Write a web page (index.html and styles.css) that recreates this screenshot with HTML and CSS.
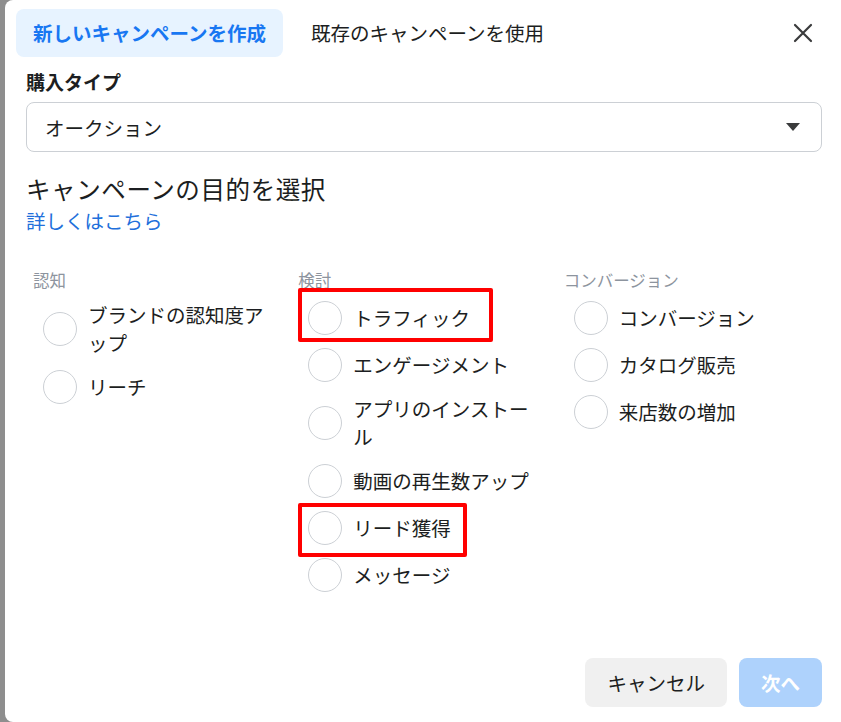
FILE: index.html
```html
<!DOCTYPE html>
<html lang="ja">
<head>
  <meta charset="UTF-8" />
  <meta name="viewport" content="width=device-width, initial-scale=1.0" />
  <title>キャンペーンを作成</title>
  <link rel="stylesheet" href="styles.css">
</head>
<body>
  <div class="dialog">
    <header class="dialog-header">
      <div class="tabs">
        <a class="tab active" href="#">新しいキャンペーンを作成</a>
        <a class="tab" href="#">既存のキャンペーンを使用</a>
      </div>
      <button class="close" type="button" aria-label="閉じる">
        <svg width="20" height="20" viewBox="0 0 20 20">
          <path d="M2 2 L18 18 M18 2 L2 18" stroke="#3a3b3c" stroke-width="2.2" stroke-linecap="round" fill="none" />
        </svg>
      </button>
    </header>

    <div class="dialog-body">
      <label class="field-label" for="buying-type">購入タイプ</label>
      <div class="select" id="buying-type">
        <span>オークション</span>
        <svg width="16" height="10" viewBox="0 0 16 10">
          <path d="M1 1 L15 1 L8 9 Z" fill="#3a3b3c" />
        </svg>
      </div>

      <h2 class="section-title">キャンペーンの目的を選択</h2>
      <a class="more-link" href="#">詳しくはこちら</a>

      <div class="objectives">
        <div class="column">
          <div class="column-label">認知</div>
          <label class="option"><span class="radio"></span><span class="option-text">ブランドの認知度アップ</span></label>
          <label class="option"><span class="radio"></span><span class="option-text">リーチ</span></label>
        </div>
        <div class="column">
          <div class="column-label">検討</div>
          <label class="option marked mark-traffic"><span class="radio"></span><span class="option-text">トラフィック</span></label>
          <label class="option"><span class="radio"></span><span class="option-text">エンゲージメント</span></label>
          <label class="option"><span class="radio"></span><span class="option-text">アプリのインストール</span></label>
          <label class="option"><span class="radio"></span><span class="option-text">動画の再生数アップ</span></label>
          <label class="option marked mark-lead"><span class="radio"></span><span class="option-text">リード獲得</span></label>
          <label class="option"><span class="radio"></span><span class="option-text">メッセージ</span></label>
        </div>
        <div class="column">
          <div class="column-label">コンバージョン</div>
          <label class="option"><span class="radio"></span><span class="option-text">コンバージョン</span></label>
          <label class="option"><span class="radio"></span><span class="option-text">カタログ販売</span></label>
          <label class="option"><span class="radio"></span><span class="option-text">来店数の増加</span></label>
        </div>
      </div>
    </div>

    <footer class="dialog-footer">
      <button class="btn btn-cancel" type="button">キャンセル</button>
      <button class="btn btn-next" type="button" disabled>次へ</button>
    </footer>
  </div>
</body>
</html>
```

FILE: styles.css
```css
body {
  margin: 0;
  padding: 0;
  background-color: #8e8e8e;
  font-family: "Noto Sans CJK JP", "Noto Sans", sans-serif;
  color: #1c1e21;
  overflow: hidden;
}

.dialog {
  margin-left: 5px;
  height: 722px;
  background-color: #fff;
  border-radius: 8px 0 0 8px;
  display: flex;
  flex-direction: column;
  box-sizing: border-box;
}

.dialog-header {
  display: flex;
  align-items: center;
  justify-content: space-between;
  padding: 9px 27px 0 11px;
}

.tabs {
  display: flex;
  gap: 11px;
}

.tab {
  display: block;
  height: 48px;
  line-height: 48px;
  padding: 0 17px;
  border-radius: 8px;
  font-size: 19.5px;
  color: #1c1e21;
  text-decoration: none;
}

.tab.active {
  background-color: #e7f3ff;
  color: #1877f2;
  font-weight: bold;
}

.close {
  width: 22px;
  height: 22px;
  padding: 0;
  border: none;
  background: none;
  display: flex;
  align-items: center;
  justify-content: center;
  cursor: pointer;
}

.dialog-body {
  padding: 0 19px 0 21px;
}

.field-label {
  display: block;
  margin-top: 11px;
  font-size: 19px;
  line-height: 28px;
  font-weight: bold;
}

.select {
  margin-top: 6px;
  height: 50px;
  box-sizing: border-box;
  border: 1px solid #ccd0d5;
  border-radius: 8px;
  padding: 0 20px 0 18px;
  display: flex;
  align-items: center;
  justify-content: space-between;
  font-size: 19.5px;
}

.section-title {
  margin: 19px 0 0;
  font-size: 24.5px;
  line-height: 36px;
  letter-spacing: 0.6px;
  font-weight: normal;
}

.more-link {
  display: inline-block;
  font-size: 19.5px;
  line-height: 28px;
  color: #216fdb;
  text-decoration: none;
}

.objectives {
  margin-top: 35px;
  display: grid;
  grid-template-columns: repeat(3, 1fr);
}

.column {
  padding: 0 20px 0 7px;
}

.column-label {
  font-size: 16.5px;
  line-height: 20px;
  color: #8d949e;
  margin-bottom: 4px;
}

.option {
  display: flex;
  align-items: center;
  gap: 11px;
  padding: 6.5px 0 6.5px 10px;
  font-size: 19.5px;
  line-height: 28px;
  cursor: pointer;
}

.radio {
  flex: none;
  width: 34px;
  height: 34px;
  box-sizing: border-box;
  border: 1px solid #ccd0d5;
  border-radius: 50%;
}

.marked {
  position: relative;
}

.marked::after {
  content: "";
  position: absolute;
  left: 0;
  box-sizing: border-box;
  height: 54px;
  border: 4px solid #ff0000;
  border-radius: 2px;
  pointer-events: none;
}

.mark-traffic::after {
  top: -6.5px;
  width: 195px;
}

.mark-lead::after {
  top: -1.5px;
  width: 169px;
}

.dialog-footer {
  margin-top: auto;
  display: flex;
  justify-content: flex-end;
  gap: 12px;
  padding: 0 19px 15px 0;
}

.btn {
  height: 49px;
  padding: 0 22px;
  border: none;
  border-radius: 8px;
  font-family: inherit;
  font-size: 19.5px;
  cursor: pointer;
}

.btn-cancel {
  background-color: #f0f0f0;
  color: #1c1e21;
}

.btn-next {
  background-color: #aed2fc;
  color: #fff;
  font-weight: bold;
  cursor: default;
}
```
